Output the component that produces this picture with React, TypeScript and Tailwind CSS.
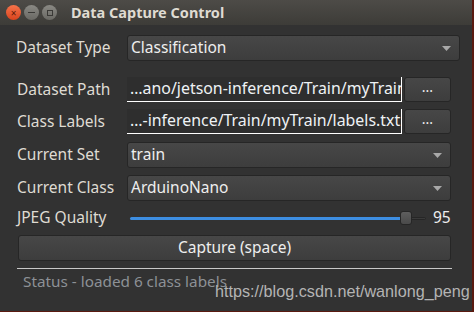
import React from "react";

const font = { fontFamily: '"Noto Sans", "Open Sans", sans-serif' };

function Combo({ value, wide }: { value: string; wide?: boolean }) {
  return (
    <div
      className={`flex h-[26px] items-center justify-between rounded-[3px] border border-[#262626] bg-gradient-to-b from-[#474747] to-[#3d3d3d] pl-[3px] pr-[8px] text-[15.5px] text-[#eeeeee] ${
        wide ? "w-[333px]" : "w-[324px]"
      }`}
    >
      <span>{value}</span>
      <svg width="9" height="5" viewBox="0 0 9 5">
        <path d="M0 0h9L4.5 5z" fill="#a8a8a8" />
      </svg>
    </div>
  );
}

function Label({ text }: { text: string }) {
  return <div className="w-[127px] shrink-0 pl-[17px] text-[15.5px] text-[#dfdbd2]">{text}</div>;
}

function PathRow({ label, value }: { label: string; value: string }) {
  return (
    <div className="flex items-center">
      <Label text={label} />
      <div className="flex h-[25px] w-[275px] items-center overflow-hidden whitespace-nowrap border-r border-b border-white bg-[#2e2e2e] pl-[3px] text-[15.9px] text-[#eef2f5]">
        {value}
      </div>
      <button className="ml-[2px] flex h-[25px] w-[47px] items-center justify-center rounded-[3px] border border-[#262626] bg-gradient-to-b from-[#474747] to-[#3d3d3d] pb-[6px] text-[14px] text-[#eeeeee]">
        ...
      </button>
    </div>
  );
}

export default function App() {
  return (
    <div className="flex h-[312px] w-[474px] bg-[#5a1a10]" style={font}>
      <div className="flex h-[311px] w-[472px] flex-col bg-[#323232]">
        {/* title bar */}
        <div className="flex h-[25px] items-center bg-gradient-to-b from-[#4d4b47] to-[#3d3c38] pl-[6px]">
          <div className="flex h-[15px] w-[15px] items-center justify-center rounded-full bg-gradient-to-b from-[#f5734a] to-[#d9431c] text-[10px] leading-none text-[#5b1a08]">
            ×
          </div>
          <div className="ml-[3px] flex h-[15px] w-[15px] items-center justify-center rounded-full bg-gradient-to-b from-[#8a8984] to-[#6a6964]">
            <div className="h-[1px] w-[7px] bg-[#3a3936]" />
          </div>
          <div className="ml-[3px] flex h-[15px] w-[15px] items-center justify-center rounded-full bg-gradient-to-b from-[#8a8984] to-[#6a6964]">
            <div className="h-[6px] w-[6px] border border-[#3a3936]" />
          </div>
          <div className="ml-[14px] text-[14.5px] font-bold text-[#dfdbd2]">Data Capture Control</div>
        </div>

        {/* Dataset Type */}
        <div className="mt-[10px] flex items-center">
          <div className="w-[127px] shrink-0 pl-[16px] text-[15.5px] text-[#dfdbd2]">Dataset Type</div>
          <Combo value="Classification" wide />
        </div>

        <div className="mt-[16px] flex flex-col gap-[7px]">
          <PathRow label="Dataset Path" value="…ano/jetson-inference/Train/myTrain" />
          <PathRow label="Class Labels" value="…-inference/Train/myTrain/labels.txt" />
        </div>

        <div className="mt-[8px] flex items-center">
          <Label text="Current Set" />
          <Combo value="train" />
        </div>
        <div className="mt-[7px] flex items-center">
          <Label text="Current Class" />
          <Combo value="ArduinoNano" />
        </div>

        {/* JPEG Quality */}
        <div className="mt-[6px] flex h-[22px] items-center">
          <div className="w-[111px] shrink-0 pl-[17px] text-[15.5px] text-[#dfdbd2]">JPEG Quality</div>
          <div className="relative ml-[19px] flex h-[14px] w-[296px] items-center">
            <div className="h-[3px] w-[272px] rounded-full bg-[#3d8ee2]" />
            <div className="h-[3px] flex-1 rounded-full border border-[#262626] bg-[#3a3a3a]" />
            <div className="absolute left-[270px] top-0 h-[14px] w-[12px] rounded-[3px] border border-[#262626] bg-gradient-to-b from-[#5e5e5e] to-[#4a4a4a]" />
          </div>
          <div className="ml-[7px] text-[15.5px] text-[#eeeeee]">95</div>
        </div>

        {/* Capture */}
        <button className="ml-[18px] mt-[6px] flex h-[26px] w-[433px] items-center justify-center rounded-[3px] border border-[#262626] bg-gradient-to-b from-[#474747] to-[#3d3d3d] text-[15.5px] text-[#eeeeee]">
          Capture (space)
        </button>

        <div className="ml-[17px] mt-[7px] h-[1px] w-[435px] bg-[#c8c8c8]" />

        <div className="relative flex-1">
          <div className="ml-[23px] mt-[1px] text-[15.3px] text-[#8d9196]">Status - loaded 6 class labels</div>
          <div
            className="absolute left-[215px] top-[10px] text-[16.2px] text-[#b4b4b4]"
            style={{ fontFamily: '"Liberation Sans", Arial, sans-serif' }}
          >
            https://blog.csdn.net/wanlong_peng
          </div>
        </div>
      </div>
    </div>
  );
}
